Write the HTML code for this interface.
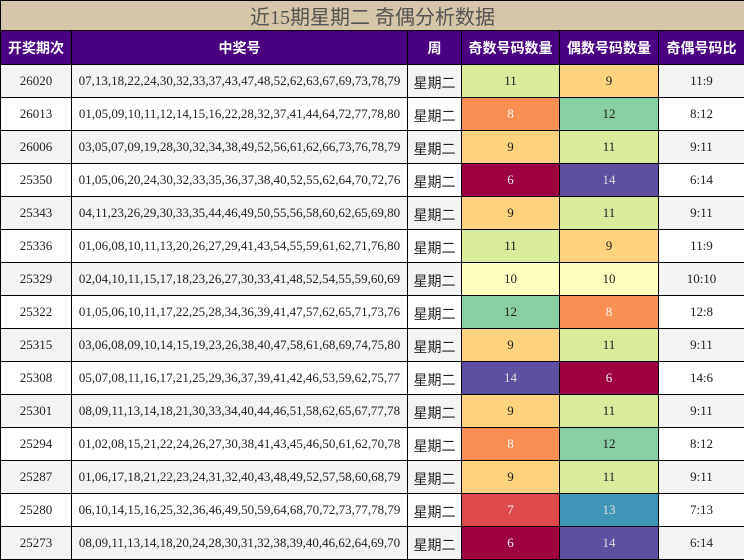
<!DOCTYPE html>
<html><head><meta charset="utf-8"><style>
*{margin:0;padding:0;box-sizing:border-box}
body{width:744px;height:560px;overflow:hidden;background:#fff}
table{border-collapse:collapse;table-layout:fixed;width:744px}
td,th{border:1px solid #000;text-align:center;overflow:hidden;white-space:nowrap}
.t{height:30px;background:#d6c6a9;color:#555;font:20px "Liberation Serif","Noto Sans CJK SC",sans-serif;font-weight:normal}
th.h{height:34px;background:#4b0082;color:#fff;font:bold 14px "Liberation Sans","Noto Sans CJK SC",sans-serif}
td{height:33px;font:13px "Liberation Serif","Noto Sans CJK SC",serif;color:#222}
td.w{font:14px "Liberation Sans","Noto Sans CJK SC",sans-serif;padding-top:3px}
tr.g td{background:#f4f4f4}
tr td.c6{background:#9e0142;color:#eee}tr td.c7{background:#dd4b4d;color:#eee}
tr td.c8{background:#f98f52;color:#f5f5f5}tr td.c9{background:#fed380;color:#222}
tr td.c10{background:#ffffbf}tr td.c11{background:#d8ec9b}
tr td.c12{background:#88d0a4}tr td.c13{background:#3e95b8;color:#ddd}
tr td.c14{background:#5e4fa2;color:#ddd}
</style></head><body>
<table>
<colgroup><col style="width:71px"><col style="width:336px"><col style="width:54px"><col style="width:98px"><col style="width:99px"><col style="width:86px"></colgroup>
<tr><th class="t" colspan="6">近15期星期二 奇偶分析数据</th></tr>
<tr><th class="h">开奖期次</th><th class="h">中奖号</th><th class="h">周</th><th class="h">奇数号码数量</th><th class="h">偶数号码数量</th><th class="h">奇偶号码比</th></tr>
<tr class="g"><td>26020</td><td>07,13,18,22,24,30,32,33,37,43,47,48,52,62,63,67,69,73,78,79</td><td class="w">星期二</td><td class="c11">11</td><td class="c9">9</td><td>11:9</td></tr>
<tr><td>26013</td><td>01,05,09,10,11,12,14,15,16,22,28,32,37,41,44,64,72,77,78,80</td><td class="w">星期二</td><td class="c8">8</td><td class="c12">12</td><td>8:12</td></tr>
<tr class="g"><td>26006</td><td>03,05,07,09,19,28,30,32,34,38,49,52,56,61,62,66,73,76,78,79</td><td class="w">星期二</td><td class="c9">9</td><td class="c11">11</td><td>9:11</td></tr>
<tr><td>25350</td><td>01,05,06,20,24,30,32,33,35,36,37,38,40,52,55,62,64,70,72,76</td><td class="w">星期二</td><td class="c6">6</td><td class="c14">14</td><td>6:14</td></tr>
<tr class="g"><td>25343</td><td>04,11,23,26,29,30,33,35,44,46,49,50,55,56,58,60,62,65,69,80</td><td class="w">星期二</td><td class="c9">9</td><td class="c11">11</td><td>9:11</td></tr>
<tr><td>25336</td><td>01,06,08,10,11,13,20,26,27,29,41,43,54,55,59,61,62,71,76,80</td><td class="w">星期二</td><td class="c11">11</td><td class="c9">9</td><td>11:9</td></tr>
<tr class="g"><td>25329</td><td>02,04,10,11,15,17,18,23,26,27,30,33,41,48,52,54,55,59,60,69</td><td class="w">星期二</td><td class="c10">10</td><td class="c10">10</td><td>10:10</td></tr>
<tr><td>25322</td><td>01,05,06,10,11,17,22,25,28,34,36,39,41,47,57,62,65,71,73,76</td><td class="w">星期二</td><td class="c12">12</td><td class="c8">8</td><td>12:8</td></tr>
<tr class="g"><td>25315</td><td>03,06,08,09,10,14,15,19,23,26,38,40,47,58,61,68,69,74,75,80</td><td class="w">星期二</td><td class="c9">9</td><td class="c11">11</td><td>9:11</td></tr>
<tr><td>25308</td><td>05,07,08,11,16,17,21,25,29,36,37,39,41,42,46,53,59,62,75,77</td><td class="w">星期二</td><td class="c14">14</td><td class="c6">6</td><td>14:6</td></tr>
<tr class="g"><td>25301</td><td>08,09,11,13,14,18,21,30,33,34,40,44,46,51,58,62,65,67,77,78</td><td class="w">星期二</td><td class="c9">9</td><td class="c11">11</td><td>9:11</td></tr>
<tr><td>25294</td><td>01,02,08,15,21,22,24,26,27,30,38,41,43,45,46,50,61,62,70,78</td><td class="w">星期二</td><td class="c8">8</td><td class="c12">12</td><td>8:12</td></tr>
<tr class="g"><td>25287</td><td>01,06,17,18,21,22,23,24,31,32,40,43,48,49,52,57,58,60,68,79</td><td class="w">星期二</td><td class="c9">9</td><td class="c11">11</td><td>9:11</td></tr>
<tr><td>25280</td><td>06,10,14,15,16,25,32,36,46,49,50,59,64,68,70,72,73,77,78,79</td><td class="w">星期二</td><td class="c7">7</td><td class="c13">13</td><td>7:13</td></tr>
<tr class="g"><td>25273</td><td>08,09,11,13,14,18,20,24,28,30,31,32,38,39,40,46,62,64,69,70</td><td class="w">星期二</td><td class="c6">6</td><td class="c14">14</td><td>6:14</td></tr>
</table>
</body></html>
